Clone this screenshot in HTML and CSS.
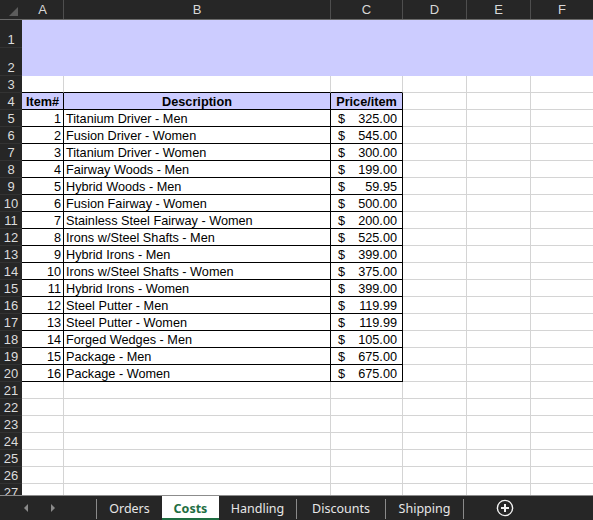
FILE: index.html
```html
<!DOCTYPE html>
<html>
<head>
<meta charset="utf-8">
<link rel="stylesheet" href="styles.css">
</head>
<body>
<div class="sheet">
  <div class="grid">
    <div class="colhead">
      <div class="corner"><svg width="22" height="19" viewBox="0 0 22 19"><polygon points="18,7 18,16 9,16" fill="#5c5c5c"/></svg></div>
      <div class="ch ca">A</div>
      <div class="ch cb">B</div>
      <div class="ch cc">C</div>
      <div class="ch cd">D</div>
      <div class="ch ce">E</div>
      <div class="ch cf">F</div>
    </div>
    <div class="band">
      <div class="rhcol">
        <div class="rh tall">1</div>
        <div class="rh tall">2</div>
      </div>
      <div class="title"></div>
    </div>
    <div class="row">
      <div class="rh">3</div>
      <div class="c ca tt"></div><div class="c cb tt"></div><div class="c cc tt"></div>
      <div class="c cd"></div><div class="c ce"></div><div class="c cf"></div>
    </div>
    <div class="row">
      <div class="rh">4</div>
      <div class="c ca t hd">Item#</div><div class="c cb t hd">Description</div><div class="c cc t hd">Price/item</div>
      <div class="c cd"></div><div class="c ce"></div><div class="c cf"></div>
    </div>
    <div class="row"><div class="rh">5</div><div class="c ca t num">1</div><div class="c cb t txt">Titanium Driver - Men</div><div class="c cc t money"><span>$</span><span>325.00</span></div><div class="c cd"></div><div class="c ce"></div><div class="c cf"></div></div>
    <div class="row"><div class="rh">6</div><div class="c ca t num">2</div><div class="c cb t txt">Fusion Driver - Women</div><div class="c cc t money"><span>$</span><span>545.00</span></div><div class="c cd"></div><div class="c ce"></div><div class="c cf"></div></div>
    <div class="row"><div class="rh">7</div><div class="c ca t num">3</div><div class="c cb t txt">Titanium Driver - Women</div><div class="c cc t money"><span>$</span><span>300.00</span></div><div class="c cd"></div><div class="c ce"></div><div class="c cf"></div></div>
    <div class="row"><div class="rh">8</div><div class="c ca t num">4</div><div class="c cb t txt">Fairway Woods - Men</div><div class="c cc t money"><span>$</span><span>199.00</span></div><div class="c cd"></div><div class="c ce"></div><div class="c cf"></div></div>
    <div class="row"><div class="rh">9</div><div class="c ca t num">5</div><div class="c cb t txt">Hybrid Woods - Men</div><div class="c cc t money"><span>$</span><span>59.95</span></div><div class="c cd"></div><div class="c ce"></div><div class="c cf"></div></div>
    <div class="row"><div class="rh">10</div><div class="c ca t num">6</div><div class="c cb t txt">Fusion Fairway - Women</div><div class="c cc t money"><span>$</span><span>500.00</span></div><div class="c cd"></div><div class="c ce"></div><div class="c cf"></div></div>
    <div class="row"><div class="rh">11</div><div class="c ca t num">7</div><div class="c cb t txt">Stainless Steel Fairway - Women</div><div class="c cc t money"><span>$</span><span>200.00</span></div><div class="c cd"></div><div class="c ce"></div><div class="c cf"></div></div>
    <div class="row"><div class="rh">12</div><div class="c ca t num">8</div><div class="c cb t txt">Irons w/Steel Shafts - Men</div><div class="c cc t money"><span>$</span><span>525.00</span></div><div class="c cd"></div><div class="c ce"></div><div class="c cf"></div></div>
    <div class="row"><div class="rh">13</div><div class="c ca t num">9</div><div class="c cb t txt">Hybrid Irons - Men</div><div class="c cc t money"><span>$</span><span>399.00</span></div><div class="c cd"></div><div class="c ce"></div><div class="c cf"></div></div>
    <div class="row"><div class="rh">14</div><div class="c ca t num">10</div><div class="c cb t txt">Irons w/Steel Shafts - Women</div><div class="c cc t money"><span>$</span><span>375.00</span></div><div class="c cd"></div><div class="c ce"></div><div class="c cf"></div></div>
    <div class="row"><div class="rh">15</div><div class="c ca t num">11</div><div class="c cb t txt">Hybrid Irons - Women</div><div class="c cc t money"><span>$</span><span>399.00</span></div><div class="c cd"></div><div class="c ce"></div><div class="c cf"></div></div>
    <div class="row"><div class="rh">16</div><div class="c ca t num">12</div><div class="c cb t txt">Steel Putter - Men</div><div class="c cc t money"><span>$</span><span>119.99</span></div><div class="c cd"></div><div class="c ce"></div><div class="c cf"></div></div>
    <div class="row"><div class="rh">17</div><div class="c ca t num">13</div><div class="c cb t txt">Steel Putter - Women</div><div class="c cc t money"><span>$</span><span>119.99</span></div><div class="c cd"></div><div class="c ce"></div><div class="c cf"></div></div>
    <div class="row"><div class="rh">18</div><div class="c ca t num">14</div><div class="c cb t txt">Forged Wedges - Men</div><div class="c cc t money"><span>$</span><span>105.00</span></div><div class="c cd"></div><div class="c ce"></div><div class="c cf"></div></div>
    <div class="row"><div class="rh">19</div><div class="c ca t num">15</div><div class="c cb t txt">Package - Men</div><div class="c cc t money"><span>$</span><span>675.00</span></div><div class="c cd"></div><div class="c ce"></div><div class="c cf"></div></div>
    <div class="row"><div class="rh">20</div><div class="c ca t num">16</div><div class="c cb t txt">Package - Women</div><div class="c cc t money"><span>$</span><span>675.00</span></div><div class="c cd"></div><div class="c ce"></div><div class="c cf"></div></div>
    <div class="row"><div class="rh">21</div><div class="c ca"></div><div class="c cb"></div><div class="c cc"></div><div class="c cd"></div><div class="c ce"></div><div class="c cf"></div></div>
    <div class="row"><div class="rh">22</div><div class="c ca"></div><div class="c cb"></div><div class="c cc"></div><div class="c cd"></div><div class="c ce"></div><div class="c cf"></div></div>
    <div class="row"><div class="rh">23</div><div class="c ca"></div><div class="c cb"></div><div class="c cc"></div><div class="c cd"></div><div class="c ce"></div><div class="c cf"></div></div>
    <div class="row"><div class="rh">24</div><div class="c ca"></div><div class="c cb"></div><div class="c cc"></div><div class="c cd"></div><div class="c ce"></div><div class="c cf"></div></div>
    <div class="row"><div class="rh">25</div><div class="c ca"></div><div class="c cb"></div><div class="c cc"></div><div class="c cd"></div><div class="c ce"></div><div class="c cf"></div></div>
    <div class="row"><div class="rh">26</div><div class="c ca"></div><div class="c cb"></div><div class="c cc"></div><div class="c cd"></div><div class="c ce"></div><div class="c cf"></div></div>
    <div class="row"><div class="rh">27</div><div class="c ca"></div><div class="c cb"></div><div class="c cc"></div><div class="c cd"></div><div class="c ce"></div><div class="c cf"></div></div>
  </div>
  <div class="tabs">
    <div class="nav">
      <svg width="6" height="8" viewBox="0 0 6 8"><polygon points="5,0 5,8 1,4" fill="#8a8a8a"/></svg>
      <svg width="6" height="8" viewBox="0 0 6 8"><polygon points="1,0 1,8 5,4" fill="#8a8a8a"/></svg>
    </div>
    <div class="sep"></div>
    <div class="tab w-orders">Orders</div>
    <div class="tab active w-costs">Costs</div>
    <div class="tab w-handling">Handling</div>
    <div class="sep"></div>
    <div class="tab w-discounts">Discounts</div>
    <div class="sep"></div>
    <div class="tab w-shipping">Shipping</div>
    <div class="sep"></div>
    <div class="add">
      <svg width="18" height="18" viewBox="0 0 18 18"><circle cx="9" cy="9" r="7.6" fill="none" stroke="#f2f2f2" stroke-width="1.4"/><path d="M9 5v8M5 9h8" stroke="#f2f2f2" stroke-width="2"/></svg>
    </div>
  </div>
</div>
</body>
</html>
```

FILE: styles.css
```css
html, body {
  margin: 0;
  padding: 0;
  background: #ffffff;
}
.sheet {
  width: 593px;
  height: 520px;
  overflow: hidden;
  display: flex;
  flex-direction: column;
  font-family: "Liberation Sans", Arial, sans-serif;
}
.grid {
  height: 495px;
  overflow: hidden;
  flex: none;
}
.colhead {
  display: flex;
  height: 20px;
  background: #262626;
  border-bottom: 1px solid #6a6a6a;
  box-sizing: border-box;
}
.corner {
  width: 22px;
  flex: none;
  display: flex;
}
.ch {
  box-sizing: border-box;
  border-right: 1px solid #4e4e4e;
  color: #d8d8d8;
  font-size: 13px;
  line-height: 20px;
  text-align: center;
  flex: none;
}
.ca { width: 42px; }
.cb { width: 267px; }
.cc { width: 72px; }
.cd { width: 64px; }
.ce { width: 64px; }
.cf { width: 62px; }
.ch.cf { border-right: none; }

.band {
  display: flex;
  height: 56px;
}
.rhcol {
  display: flex;
  flex-direction: column;
}
.title {
  flex: 1;
  background: #ccccff;
}
.row {
  display: flex;
  height: 17px;
}
.rh {
  width: 22px;
  height: 17px;
  flex: none;
  box-sizing: border-box;
  background: #262626;
  border-bottom: 1px solid #333333;
  color: #dcdcdc;
  font-size: 13px;
  line-height: 14px;
  text-align: center;
  display: flex;
  align-items: flex-end;
  justify-content: center;
}
.rh.tall {
  height: 28px;
}
.c {
  flex: none;
  box-sizing: border-box;
  border-right: 1px solid #d4d4d4;
  border-bottom: 1px solid #d4d4d4;
  font-size: 12.7px;
  line-height: 13px;
  color: #000000;
  display: flex;
  align-items: flex-end;
  white-space: nowrap;
  overflow: hidden;
}
.c.cf { border-right: none; }
.c.tt { border-bottom-color: #000000; }
.c.t {
  border-right-color: #000000;
  border-bottom-color: #000000;
}
.hd {
  background: #ccccff;
  font-weight: bold;
  justify-content: center;
}
.num {
  justify-content: flex-end;
  padding-right: 2px;
}
.txt {
  padding-left: 2px;
}
.money {
  justify-content: space-between;
  padding-left: 7px;
  padding-right: 5px;
}

.tabs {
  flex: 1;
  display: flex;
  align-items: stretch;
  background: #262626;
  border-top: 1px solid #8c8c8c;
  box-sizing: border-box;
  font-family: "Noto Sans", "Open Sans", sans-serif;
  font-size: 12.5px;
  color: #e6e6e6;
}
.nav {
  width: 96px;
  flex: none;
  display: flex;
  align-items: center;
  padding-left: 23px;
  gap: 21px;
  box-sizing: border-box;
}
.sep {
  width: 1px;
  flex: none;
  background: #8a8a8a;
  margin-top: 3px;
  margin-bottom: 1px;
}
.tab {
  flex: none;
  display: flex;
  align-items: center;
  justify-content: center;
  box-sizing: border-box;
}
.tab.active {
  background: #ffffff;
  color: #1e6e42;
  font-weight: bold;
  border-bottom: 2px solid #1e6e42;
  padding-top: 2px;
}
.w-orders { width: 65px; }
.w-costs { width: 57px; }
.w-handling { width: 77px; }
.w-discounts { width: 88px; }
.w-shipping { width: 77px; }
.add {
  margin-left: 32px;
  display: flex;
  align-items: center;
}
```
